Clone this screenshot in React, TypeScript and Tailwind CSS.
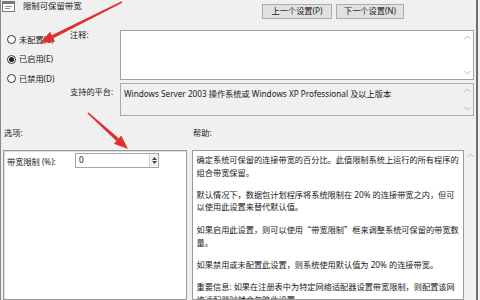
import React from 'react';

const font = { fontFamily: '"Noto Sans", "Noto Sans CJK SC", sans-serif' };
const cjk = { fontFamily: '"Noto Sans CJK SC", sans-serif' };

// 帮助文本（按原图换行）
const helpParas: React.ReactNode[][] = [
  ['确定系统可保留的连接带宽的百分比。此值限制系统上运行的所有程序的', '组合带宽保留。'],
  ['默认情况下，数据包计划程序将系统限制在 20% 的连接带宽之内，但可', '以使用此设置来替代默认值。'],
  [
    <>如果启用此设置，则可以使用<span style={cjk}>“</span>带宽限制<span style={cjk}>”</span>框来调整系统可保留的带宽数</>,
    '量。',
  ],
  ['如果禁用或未配置此设置，则系统使用默认值为 20% 的连接带宽。'],
  ['重要信息: 如果在注册表中为特定网络适配器设置带宽限制，则配置该网', '络适配器时就会忽略此设置。'],
];

// 单选按钮
function Radio({ label, checked }: { label: string; checked?: boolean }) {
  return (
    <div className="flex items-center gap-[3px] h-[19.5px]">
      <span className="w-[9px] h-[9px] rounded-full border border-[#333] bg-white flex items-center justify-center">
        {checked && <span className="w-[5px] h-[5px] rounded-full bg-[#222]" />}
      </span>
      <span>{label}</span>
    </div>
  );
}

// 滚动条箭头
function ScrollArrows({ h }: { h: number }) {
  return (
    <div className="w-[12px] flex flex-col justify-between items-center py-[4px] text-[#b5b5b5]" style={{ height: h }}>
      <svg width="7" height="5" viewBox="0 0 7 5"><path d="M0.5 4 L3.5 1 L6.5 4" fill="none" stroke="currentColor" /></svg>
      <svg width="7" height="5" viewBox="0 0 7 5"><path d="M0.5 1 L3.5 4 L6.5 1" fill="none" stroke="currentColor" /></svg>
    </div>
  );
}

function Arrow({ x1, y1, x2, y2 }: { x1: number; y1: number; x2: number; y2: number }) {
  const dx = x2 - x1;
  const dy = y2 - y1;
  const len = Math.hypot(dx, dy);
  const ux = dx / len;
  const uy = dy / len;
  const bx = x2 - ux * 14;
  const by = y2 - uy * 14;
  const px = -uy;
  const py = ux;
  return (
    <g>
      <polygon
        points={`${x1 + px * 0.8},${y1 + py * 0.8} ${bx + px * 1.8},${by + py * 1.8} ${bx - px * 1.8},${by - py * 1.8} ${x1 - px * 0.8},${y1 - py * 0.8}`}
        fill="#e0302b"
      />
      <polygon points={`${x2},${y2} ${bx + px * 5.5},${by + py * 5.5} ${bx - px * 5.5},${by - py * 5.5}`} fill="#e0302b" />
    </g>
  );
}

export default function App() {
  return (
    <div className="relative w-[480px] h-[300px] overflow-hidden bg-[#f0f0f0] text-[8.2px] text-[#1a1a1a] border-l border-[#8a8a8a]" style={font}>
      <div className="flex flex-col border-r-2 border-[#6e6e6e] w-[477px] h-[300px]">
        {/* 标题行 */}
        <div className="flex shrink-0 h-[30px] items-start">
          <div className="flex items-center gap-[8px] pl-[1px] h-[13px]">
            <svg width="13" height="11" viewBox="0 0 13 11">
              <rect x="0.5" y="0.5" width="12" height="10" fill="#fff" stroke="#7a7a7a" />
              <rect x="1" y="1" width="11" height="2" fill="#6b7b8c" />
              <path d="M3 5.5 H10 M3 7.5 H8" stroke="#8f8f8f" />
            </svg>
            <span className="text-[8.4px]">限制可保留带宽</span>
          </div>
          <div className="ml-auto mr-[72px] mt-[4px] flex gap-[4px]">
            <button className="w-[70px] h-[15px] bg-[#e1e1e1] border border-[#adadad] text-[8.2px] leading-none">上一个设置(P)</button>
            <button className="w-[68px] h-[15px] bg-[#e1e1e1] border border-[#adadad] text-[8.2px] leading-none">下一个设置(N)</button>
          </div>
        </div>

        {/* 状态与注释 */}
        <div className="flex shrink-0">
          <div className="w-[69px] pl-[6px] pt-[-1px]">
            <Radio label="未配置(C)" />
            <Radio label="已启用(E)" checked />
            <Radio label="已禁用(D)" />
          </div>
          <div className="flex flex-col">
            <div className="flex">
              <div className="w-[50px] pt-[0px] leading-[10px]">注释:</div>
              <div className="w-[354px] h-[50px] bg-white border border-[#a0a0a0] flex justify-end">
                <ScrollArrows h={48} />
              </div>
            </div>
            <div className="flex mt-[3px]">
              <div className="w-[50px] pt-[3px]">支持的平台:</div>
              <div className="w-[354px] h-[33px] bg-[#f0f0f0] border border-[#a9a9a9] flex">
                <div className="flex-1 pl-[3px] pt-[4px]">Windows Server 2003 操作系统或 Windows XP Professional 及以上版本</div>
                <ScrollArrows h={31} />
              </div>
            </div>
          </div>
        </div>

        {/* 选项 / 帮助 标签 */}
        <div className="flex shrink-0 h-[34px] items-center">
          <span className="pl-[3px] w-[192px]">选项:</span>
          <span>帮助:</span>
        </div>

        {/* 面板 */}
        <div className="flex flex-1 min-h-0 pl-[2px]">
          <div className="w-[184px] bg-white border border-[#9a9a9a] shadow-[inset_1px_1px_0_#dcdcdc] flex items-start pt-[2px] pl-[3px]">
            <span className="w-[68px] pt-[3px]">带宽限制 (%):</span>
            <div className="w-[84px] h-[15px] border border-[#a6a6a6] flex items-center">
              <span className="flex-1 pl-[3px]">0</span>
              <div className="w-[9px] h-[13px] flex flex-col items-center justify-center gap-[1px] bg-[#f0f0f0] border-l border-[#d0d0d0]">
                <svg width="5" height="3" viewBox="0 0 5 3"><path d="M0 3 L2.5 0 L5 3 Z" fill="#444" /></svg>
                <svg width="5" height="3" viewBox="0 0 5 3"><path d="M0 0 L2.5 3 L5 0 Z" fill="#444" /></svg>
              </div>
            </div>
          </div>
          <div className="ml-[5px] w-[273px] bg-white border border-[#9a9a9a] px-[4px] pt-[3px] leading-[12.6px] overflow-hidden">
            {helpParas.map((lines, i) => (
              <div key={i} className="mb-[9.5px]">
                {lines.map((line, j) => (
                  <div key={j} className="whitespace-nowrap">{line}</div>
                ))}
              </div>
            ))}
          </div>
          <div className="w-[12px] flex justify-center pt-[3px] text-[#b5b5b5]">
            <svg width="7" height="5" viewBox="0 0 7 5"><path d="M0.5 4 L3.5 1 L6.5 4" fill="none" stroke="currentColor" /></svg>
          </div>
        </div>
      </div>

      {/* 红色标注箭头 */}
      <svg className="absolute left-0 top-0 pointer-events-none" width="480" height="300">
        <Arrow x1={121} y1={2} x2={39} y2={43} />
        <Arrow x1={87} y1={113} x2={127} y2={149} />
      </svg>
    </div>
  );
}
